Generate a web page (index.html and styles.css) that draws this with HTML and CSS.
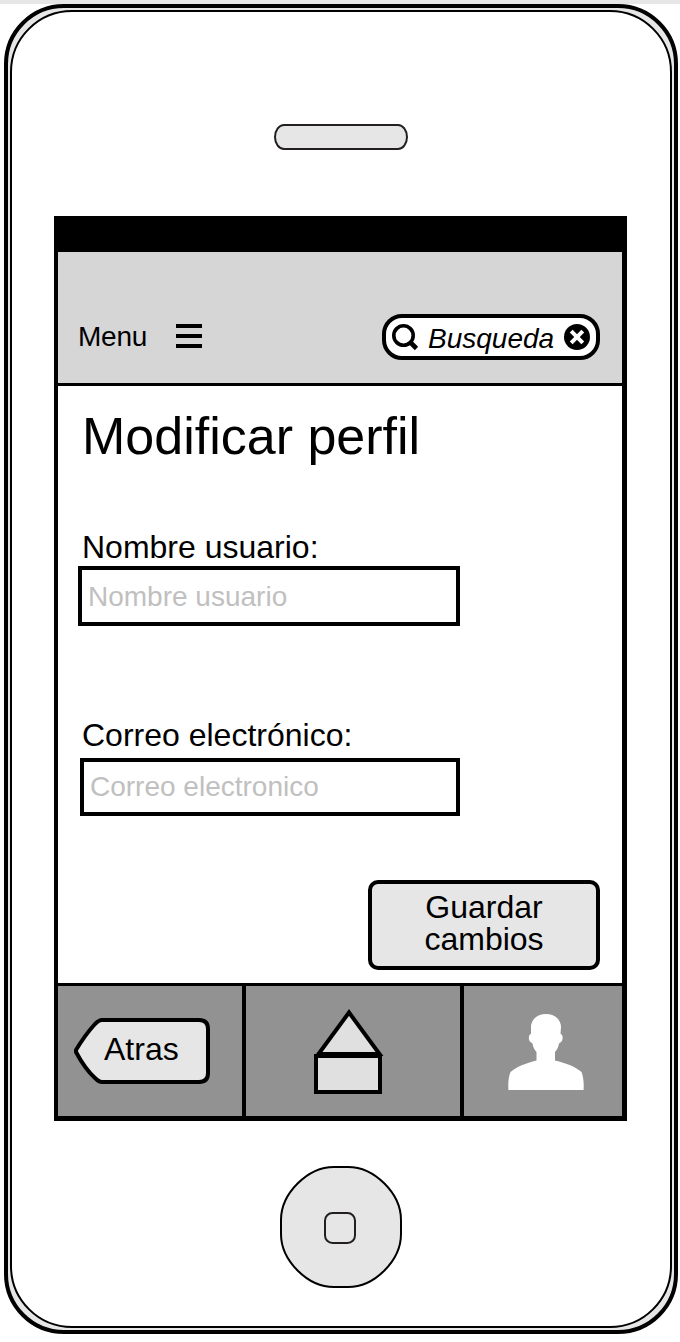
FILE: index.html
```html
<!DOCTYPE html>
<html lang="es">
<head>
<meta charset="utf-8">
<title>Modificar perfil</title>
<link rel="stylesheet" href="styles.css">
</head>
<body>
<div class="phone">
  <div class="phone-face">
    <div class="speaker"></div>
    <main class="screen">
      <header class="header">
        <span class="menu-label">Menu</span>
        <div class="burger"><i></i><i></i><i></i></div>
        <div class="search">
          <svg class="search-icon" width="28" height="28" viewBox="0 0 28 28">
            <circle cx="12.500" cy="11.500" r="9.700" fill="none" stroke="#000" stroke-width="3.600"/>
            <path d="M19 18L25.500 24.500" stroke="#000" stroke-width="4.600"/>
          </svg>
          <span class="search-text">Busqueda</span>
          <svg class="clear-icon" width="26" height="26" viewBox="0 0 26 26">
            <circle cx="13" cy="13" r="13"/>
            <path d="M7.200 7.200L18.800 18.800M18.800 7.200L7.200 18.800" stroke="#fff" stroke-width="4"/>
          </svg>
        </div>
      </header>
      <section class="content">
        <h1 class="title">Modificar perfil</h1>
        <label class="label label-name">Nombre usuario:</label>
        <div class="field field-name">Nombre usuario</div>
        <label class="label label-mail">Correo electrónico:</label>
        <div class="field field-mail">Correo electronico</div>
        <div class="save">Guardar<br>cambios</div>
      </section>
      <nav class="tabs">
        <div class="tab tab-back">
          <div class="back">
            <svg class="back-shape" width="136" height="66" viewBox="0 0 136 66">
              <path d="M28 2H125Q134 2 134 11V55Q134 64 125 64H28Q25 64 21 60Q11 51 2 34V32Q11 17 21 6Q25 2 28 2Z" fill="#e6e6e6" stroke="#000" stroke-width="4" stroke-linejoin="round"/>
            </svg>
            <span class="back-text">Atras</span>
          </div>
        </div>
        <div class="tab tab-home">
          <svg width="70" height="86" viewBox="0 0 70 86">
            <path d="M35 4.500L4.500 46H65.500Z" fill="#e0e0e0" stroke="#000" stroke-width="4"/>
            <rect x="2" y="48" width="64" height="36" fill="#e0e0e0" stroke="#000" stroke-width="4"/>
          </svg>
        </div>
        <div class="tab tab-user">
          <svg width="76" height="76" viewBox="0 0 76 76">
            <path d="M38 0C47 0 53 6 53 13L52.500 20C55 20 55.500 26 53 28L51 29.500C50.500 33 49 36 47 38V46.500C58 49 68 53 73.500 58C75.500 63 76 69 75.600 76H.4C0 69 .5 63 2.500 58C8 53 18 49 28.500 46.500V38C26.500 36 25 33 24.500 29.500L22.500 28C20 26 20.500 20 23 20V13C23 6 29 0 38 0Z" fill="#fff"/>
          </svg>
        </div>
      </nav>
    </main>
    <svg class="home-button" width="122" height="122" viewBox="0 0 122 122">
      <path d="M54 1H68C94.500 1 121 27.500 121 54V68C121 94.500 94.500 121 68 121H54C27.500 121 1 94.500 1 68V54C1 27.500 27.500 1 54 1Z" fill="#e6e6e6" stroke="#000" stroke-width="2"/>
      <rect x="45" y="47" width="30" height="30" rx="7.500" fill="none" stroke="#231f20" stroke-width="2"/>
    </svg>
  </div>
</div>
</body>
</html>
```
FILE: styles.css
```css
* { box-sizing: border-box; }
body {
  margin: 0;
  height: 1342px;
  overflow: hidden;
  border-top: 4px solid #e6e6e6;
  background: #fff;
  color: #000;
  font-family: "Liberation Sans", Arial, sans-serif;
}
.phone {
  width: 674px;
  height: 1330px;
  margin-left: 4px;
  padding: 2px;
  border: 4px solid #000;
  border-radius: 60px;
  background: #e6e6e6;
}
.phone-face {
  display: flex;
  flex-direction: column;
  height: 1318px;
  padding: 112px 0 0 42px;
  border: 2px solid #000;
  border-radius: 62px;
  background: #fff;
}
.speaker {
  flex: none;
  width: 134px;
  height: 26px;
  margin-left: 220px;
  border: 2px solid #231f20;
  border-radius: 10px / 13px;
  background: #e6e6e6;
}
.screen {
  display: flex;
  flex-direction: column;
  flex: none;
  width: 573px;
  height: 905px;
  margin-top: 66px;
  border: solid #000;
  border-width: 36px 5px 5px 4px;
}
.header {
  display: flex;
  height: 134px;
  flex: none;
  padding: 62px 22px 0 20px;
  border-bottom: 3px solid #000;
  background: #d6d6d6;
}
.menu-label {
  width: 98px;
  margin-top: 9px;
  font-size: 28px;
  line-height: 28px;
  letter-spacing: -0.2px;
}
.burger {
  display: flex;
  flex-direction: column;
  gap: 6px;
  margin-top: 10px;
}
.burger i {
  width: 26px;
  height: 4px;
  background: #000;
}
.search {
  display: flex;
  width: 218px;
  height: 46px;
  margin-left: auto;
  padding: 6px 6px 0;
  border: 4px solid #000;
  border-radius: 20px;
  background: #fff;
}
.search-text {
  width: 135px;
  margin: 1px 0 0 9px;
  font-size: 28px;
  font-style: italic;
  line-height: 28px;
}
.search-icon, .clear-icon { flex: none; }
.search-icon { margin-left: -1px; }
.clear-icon { margin-left: 1px; }
.content {
  display: flex;
  flex-direction: column;
  height: 597px;
  flex: none;
  padding: 24px 22px 0 20px;
}
.title {
  margin: 0 0 0 4px;
  font-size: 52px;
  font-weight: 400;
  line-height: 52px;
}
.label {
  margin-left: 4px;
  font-size: 32px;
  line-height: 32px;
}
.label-name { margin-top: 69px; }
.label-mail { margin-top: 93px; }
.field {
  border: 4px solid #000;
  color: #c0c0c0;
  font-size: 28px;
  line-height: 28px;
}
.field-name {
  width: 382px;
  height: 60px;
  margin-top: 3px;
  padding: 13px 6px 0;
}
.field-mail {
  width: 380px;
  height: 58px;
  margin: 7px 0 0 2px;
  padding: 11px 6px 0;
}
.save {
  align-self: flex-end;
  width: 232px;
  height: 90px;
  margin-top: 64px;
  padding-top: 7px;
  border: 4px solid #000;
  border-radius: 10px;
  background: #e6e6e6;
  font-size: 32px;
  line-height: 32px;
  text-align: center;
}
.tabs {
  display: flex;
  height: 133px;
  flex: none;
  border-top: 3px solid #000;
  background: #929292;
}
.tab-back {
  width: 188px;
  padding: 32px 0 0 16px;
  border-right: 4px solid #000;
}
.tab-home {
  width: 218px;
  padding: 22px 0 0 68px;
  border-right: 4px solid #000;
}
.tab-user { padding: 28px 0 0 44px; }
.back { display: grid; }
.back-shape, .back-text { grid-area: 1 / 1; }
.back-text {
  z-index: 1;
  margin: 15px 0 0 30px;
  font-size: 32px;
  line-height: 32px;
}
.home-button {
  flex: none;
  margin: 45px 0 0 226px;
}
```
